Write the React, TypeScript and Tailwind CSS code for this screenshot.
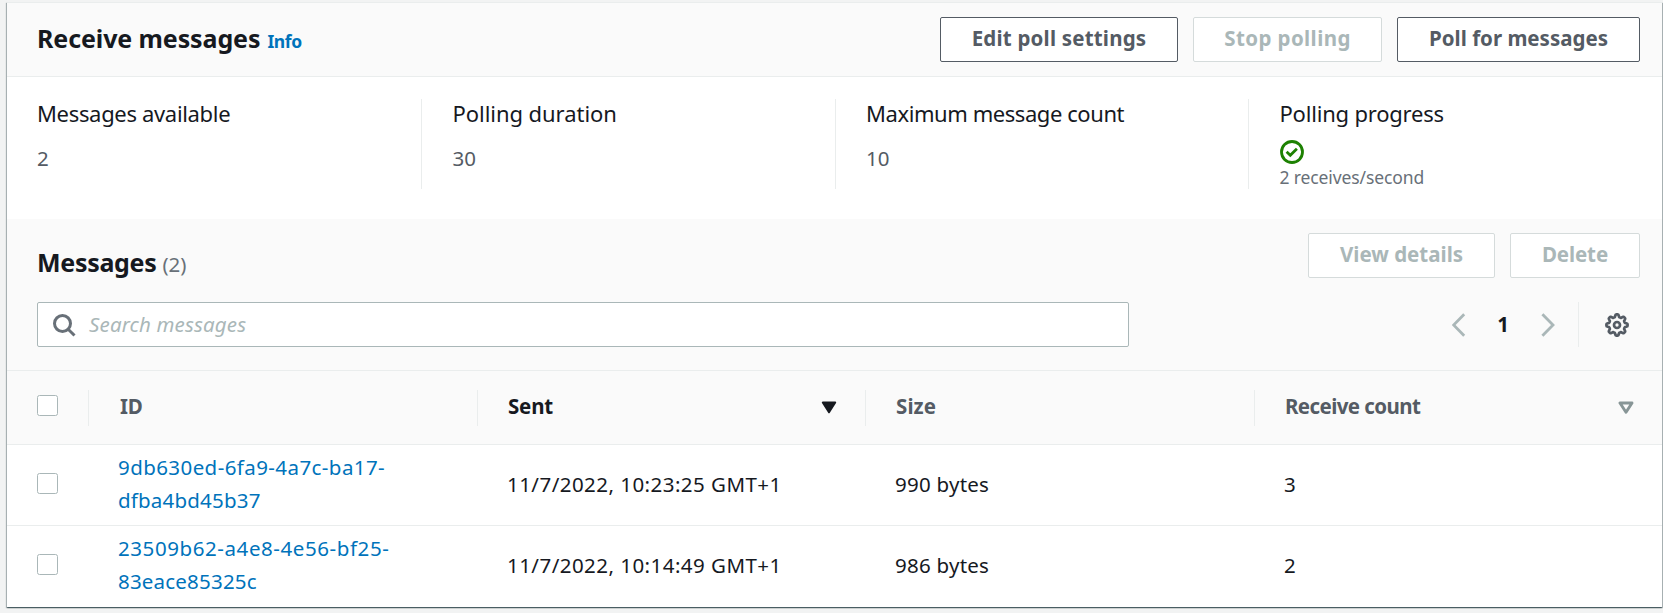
import type { ReactNode } from 'react';

function Button({ children, disabled, className }: { children: ReactNode; disabled?: boolean; className: string }) {
  return (
    <button
      disabled={disabled}
      className={`h-[45px] shrink-0 rounded-[2px] border bg-white pb-[3px] text-[20.5px] leading-[33px] font-bold whitespace-nowrap ${
        disabled ? 'border-[#d5dbdb] text-[#aab7b8]' : 'border-[#545b64] text-[#545b64]'
      } ${className}`}
    >
      {children}
    </button>
  );
}

function Checkbox() {
  return <span className="block size-[21px] rounded-[2.5px] border-[1.5px] border-[#aab7b8] bg-white" />;
}

function Stat({ label, labelClass, first, children }: { label: string; labelClass: string; first?: boolean; children: ReactNode }) {
  return (
    <div className={`h-[90px] ${first ? 'w-[384px]' : 'w-[413.5px] border-l border-[#eaeded] pl-[30.5px]'}`}>
      <div className={`text-[22px] leading-[28px] whitespace-nowrap text-[#16191f] ${labelClass}`}>{label}</div>
      {children}
    </div>
  );
}

function Value({ children }: { children: ReactNode }) {
  return <div className="mt-[15px] text-[20.5px] leading-[33px] text-[#545b64]">{children}</div>;
}

function HeaderCell({ children, className, icon }: { children: ReactNode; className: string; icon?: ReactNode }) {
  return (
    <div className={`flex h-[36px] items-center justify-between border-l border-[#eaeded] pl-[30px] ${className}`}>
      <span className="pb-[2px]">{children}</span>
      {icon}
    </div>
  );
}

const gearPath =
  Array.from({ length: 96 }, (_, i) => {
    const a = (i / 96) * Math.PI * 2;
    const r = 9.3 + 1.35 * Math.tanh(2 * Math.cos(8 * a));
    return `${i ? 'L' : 'M'}${(12 + r * Math.cos(a)).toFixed(2)} ${(12 + r * Math.sin(a)).toFixed(2)}`;
  }).join('') + 'z';

const rows = [
  {
    id: [
      { text: '9db630ed-6fa9-4a7c-ba17-', tracking: 'tracking-[0.42px]' },
      { text: 'dfba4bd45b37', tracking: 'tracking-[0.2px]' },
    ],
    sent: '11/7/2022, 10:23:25 GMT+1',
    size: '990 bytes',
    count: 3,
  },
  {
    id: [
      { text: '23509b62-a4e8-4e56-bf25-', tracking: 'tracking-[0.58px]' },
      { text: '83eace85325c', tracking: 'tracking-[0.2px]' },
    ],
    sent: '11/7/2022, 10:14:49 GMT+1',
    size: '986 bytes',
    count: 2,
  },
];

export default function App() {
  return (
    <div className="h-[613px] w-[1663px] overflow-hidden bg-[#f2f3f3] pt-[2px] pl-[7px] font-['Noto_Sans','Open_Sans',sans-serif] text-[#16191f]">
      <main className="h-[605px] w-[1655px] border-t border-[#eaeded] bg-white shadow-[0_1px_1px_0_rgba(0,28,36,0.45),1px_1px_1px_0_rgba(0,28,36,0.25),-1px_1px_1px_0_rgba(0,28,36,0.25)]">
        <header className="flex h-[74px] items-start gap-[15px] border-b border-[#eaeded] bg-[#fafafa] pt-[14px] pr-[22px] pl-[30px]">
          <div className="flex flex-1 items-baseline gap-[7px] pt-[1px]">
            <h1 className="text-[25px] leading-[40px] font-bold tracking-[-0.1px]">Receive messages</h1>
            <a className="text-[17.5px] font-bold tracking-[-0.4px] text-[#0073bb]">Info</a>
          </div>
          <Button className="w-[238px] tracking-[0.2px]">Edit poll settings</Button>
          <Button disabled className="w-[189px] tracking-[0.4px]">Stop polling</Button>
          <Button className="w-[243px]">Poll for messages</Button>
        </header>

        <section className="flex h-[142px] pt-[22px] pl-[30px]">
          <Stat first label="Messages available" labelClass="tracking-[-0.33px]">
            <Value>2</Value>
          </Stat>
          <Stat label="Polling duration" labelClass="tracking-[-0.05px]">
            <Value>30</Value>
          </Stat>
          <Stat label="Maximum message count" labelClass="tracking-[-0.43px]">
            <Value>10</Value>
          </Stat>
          <Stat label="Polling progress" labelClass="tracking-[-0.2px]">
            <svg className="mt-[13px] block size-[24px]" viewBox="0 0 24 24" fill="none" stroke="#1d8102" strokeWidth="2.8">
              <circle cx="12" cy="12" r="10.5" />
              <path d="M6.6 11.7l3.7 3.6 6.6-6.5" />
            </svg>
            <div className="mt-[1px] text-[17.5px] leading-[24px] tracking-[-0.12px] text-[#687078]">2 receives/second</div>
          </Stat>
        </section>

        <section className="h-[152px] border-b border-[#eaeded] bg-[#fafafa] pt-[14px] pr-[22px] pl-[30px]">
          <div className="flex items-start gap-[15px]">
            <div className="flex flex-1 items-baseline gap-[6px] pt-[9px]">
              <h2 className="text-[25px] leading-[40px] font-bold tracking-[-0.3px]">Messages</h2>
              <span className="text-[20.5px] tracking-[-0.1px] text-[#687078]">(2)</span>
            </div>
            <Button disabled className="w-[187px]">View details</Button>
            <Button disabled className="w-[130px] tracking-[-0.1px]">Delete</Button>
          </div>
          <div className="mt-[20px] flex items-start">
            <div className="flex h-[45px] w-[1092px] items-center rounded-[2px] border border-[#aab7b8] bg-white pl-[14px]">
              <svg className="size-[24px]" viewBox="0 0 24 24" fill="none" stroke="#687078" strokeWidth="3">
                <circle cx="10.5" cy="10.5" r="8" />
                <path d="M16.200 16.200l6.300 6.300" />
              </svg>
              <span className="ml-[13px] text-[20.5px] leading-[33px] tracking-[0.15px] text-[#aab7b8] italic">Search messages</span>
            </div>
            <div className="ml-auto flex h-[45px] items-center">
              <svg className="h-[24px] w-[14px]" viewBox="0 0 14 24" fill="none" stroke="#aab7b8" strokeWidth="2.8">
                <path d="M12.2 1.2L1.600 12l10.6 10.8" />
              </svg>
              <span className="w-[75px] pr-[1px] text-center text-[20.5px] leading-[33px] font-bold">1</span>
              <svg className="h-[24px] w-[14px]" viewBox="0 0 14 24" fill="none" stroke="#aab7b8" strokeWidth="2.8">
                <path d="M1.4 1.2L12 12 1.4 22.8" />
              </svg>
              <span className="ml-[23px] h-[45px] w-px bg-[#eaeded]" />
              <svg className="mt-[1px] mr-[11px] ml-[26px] size-[24px]" viewBox="0 0 24 24" fill="none" stroke="#545b64" strokeWidth="2.7" strokeLinejoin="round">
                <path d={gearPath} />
                <circle cx="12" cy="12" r="3" />
              </svg>
            </div>
          </div>
        </section>

        <div className="flex h-[74px] items-center border-b border-[#eaeded] bg-[#fafafa] text-[20.5px] leading-[33px] font-bold text-[#545b64]">
          <div className="w-[81px] pb-[4px] pl-[30px]">
            <Checkbox />
          </div>
          <HeaderCell className="w-[389px] pl-[31px] tracking-[-0.3px]">ID</HeaderCell>
          <HeaderCell
            className="w-[388px] pr-[28px] tracking-[-0.2px] text-[#16191f]"
            icon={
              <svg className="h-[14px] w-[16px]" viewBox="0 0 16 14" fill="#16191f" stroke="#16191f" strokeWidth="2" strokeLinejoin="round">
                <path d="M1.800 1.500h12.400L8 11.300z" />
              </svg>
            }
          >
            Sent
          </HeaderCell>
          <HeaderCell className="w-[389px] tracking-[0.1px]">Size</HeaderCell>
          <HeaderCell
            className="flex-1 pr-[28px] tracking-[-0.58px]"
            icon={
              <svg className="h-[14px] w-[16px]" viewBox="0 0 16 14" fill="none" stroke="#879596" strokeWidth="2.9" strokeLinejoin="round">
                <path d="M2 2h12L8 11.300z" />
              </svg>
            }
          >
            Receive count
          </HeaderCell>
        </div>

        {rows.map((row) => (
          <div key={row.sent} className="flex h-[81px] items-center border-b border-[#eaeded] pb-[2px] text-[20.5px] leading-[33px] last:border-b-0 last:pb-[3px]">
            <div className="w-[111px] pb-[2px] pl-[30px]">
              <Checkbox />
            </div>
            <a className="w-[389px] text-[#0073bb]">
              {row.id.map((line) => (
                <span key={line.text} className={`block ${line.tracking}`}>
                  {line.text}
                </span>
              ))}
            </a>
            <div className="w-[388px] tracking-[0.46px]">{row.sent}</div>
            <div className="w-[389px] tracking-[0.25px]">{row.size}</div>
            <div>{row.count}</div>
          </div>
        ))}
      </main>
    </div>
  );
}
